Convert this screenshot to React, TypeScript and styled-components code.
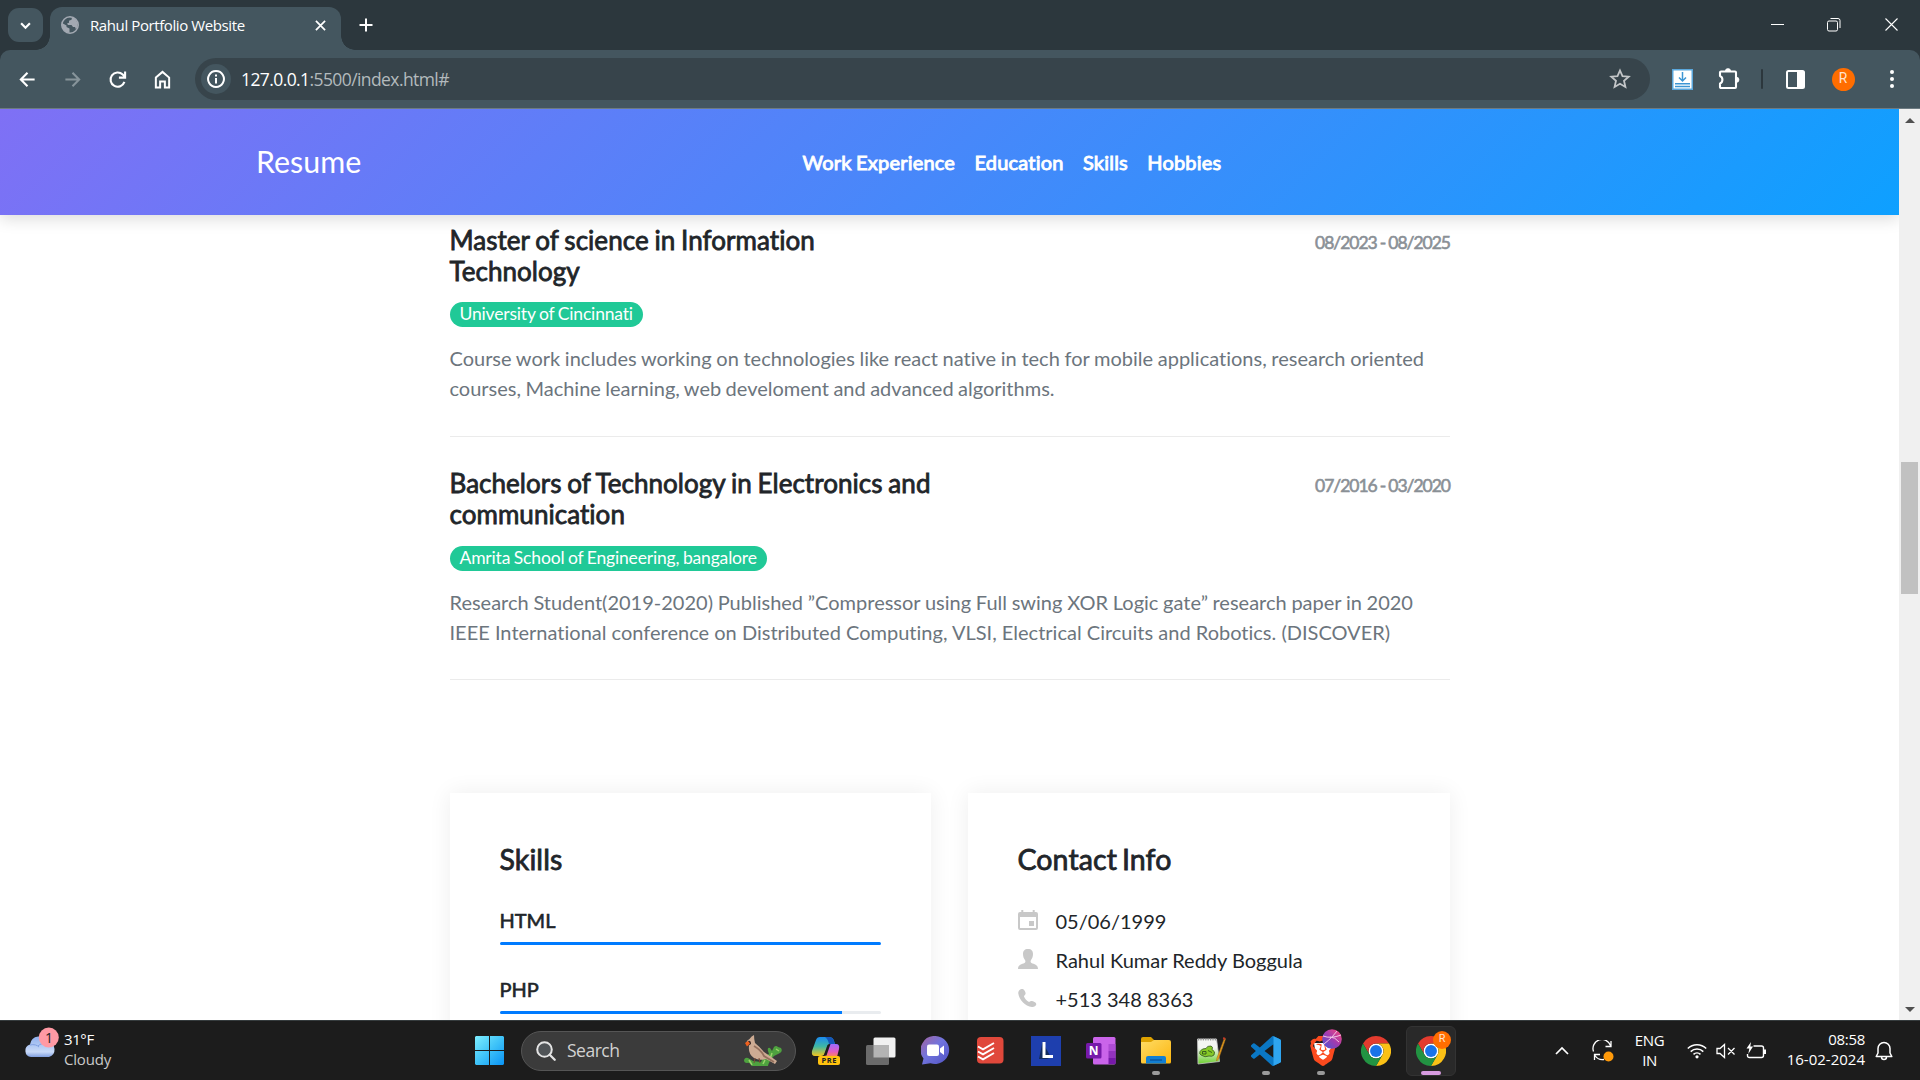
import React from "react";
import styled, { createGlobalStyle, css } from "styled-components";
import { SiBrave } from "react-icons/si";

const ui = `"Open Sans", "Noto Sans", sans-serif`;
const lato = `Lato, "Open Sans", sans-serif`;

const GlobalStyle = createGlobalStyle`
  *, *::before, *::after { box-sizing: border-box; }
  html, body { margin: 0; padding: 0; overflow: hidden; }
  h1, h2, h3, h4, p, ul { margin: 0; padding: 0; font-weight: 400; }
  ul { list-style: none; }
  svg { display: block; flex: none; }
`;

const Desktop = styled.div`
  width: 1920px;
  height: 1080px;
  display: flex;
  flex-direction: column;
  overflow: hidden;
  background: #2c373d;
  font-family: ${ui};
`;

/* Browser frame */

const TabStrip = styled.div`
  height: 50px;
  flex: none;
  display: flex;
  align-items: flex-start;
  padding: 8px 0 0 8px;
  color: #fff;
`;

const TabSearch = styled.div`
  width: 35px;
  height: 34px;
  border-radius: 11px;
  background: #44565f;
  display: grid;
  place-items: center;
`;

const Tab = styled.div`
  position: relative;
  width: 291px;
  height: 43px;
  margin: -1px 0 0 7px;
  padding: 0 15px 7px 11px;
  display: flex;
  align-items: center;
  border-radius: 12px 12px 0 0;
  background: #44565f;
  &::before, &::after {
    content: "";
    position: absolute;
    bottom: 0;
    width: 14px;
    height: 14px;
  }
  &::before { left: -14px; background: radial-gradient(circle at 0 0, transparent 13.5px, #44565f 14px); }
  &::after { right: -14px; background: radial-gradient(circle at 100% 0, transparent 13.5px, #44565f 14px); }
`;

const TabTitle = styled.span`
  flex: 1;
  margin-left: 11px;
  font-size: 15px;
  line-height: 20px;
  letter-spacing: -0.4px;
  white-space: nowrap;
`;

const Slot = styled.div<{ $w: number }>`
  width: ${(p) => p.$w}px;
  flex: none;
  align-self: stretch;
  display: flex;
  align-items: center;
  justify-content: center;
`;

const NewTab = styled(Slot)`
  height: 34px;
  align-self: flex-start;
`;

const WindowControls = styled.div`
  display: flex;
  height: 33px;
  margin-left: auto;
`;

const Toolbar = styled.div`
  height: 59px;
  flex: none;
  display: flex;
  align-items: center;
  padding-left: 6px;
  background: #44565f;
  border-bottom: 1px solid #6d7b82;
  border-radius: 10px 10px 0 0;
  color: #fff;
`;

const Omnibox = styled.div`
  width: 1455px;
  height: 42px;
  margin: 0 9px 0 10px;
  padding: 0 19px 0 6px;
  display: flex;
  align-items: center;
  border-radius: 21px;
  background: #37444b;
`;

const SiteInfo = styled.span`
  width: 30px;
  height: 30px;
  border-radius: 50%;
  background: #44565f;
  display: grid;
  place-items: center;
`;

const Url = styled.span`
  flex: 1;
  margin-left: 10px;
  font-size: 17.5px;
  letter-spacing: -0.59px;
  color: #b3babd;
  b { font-weight: 400; color: #fff; }
`;

const Divider = styled.i`
  width: 2px;
  height: 20px;
  border-radius: 1px;
  background: #2c373d;
`;

const Avatar = styled.span<{ $size: number }>`
  width: ${(p) => p.$size}px;
  height: ${(p) => p.$size}px;
  border-radius: 50%;
  background: #ff6d00;
  color: #ffe3cf;
  display: grid;
  place-items: center;
  font: 400 ${(p) => p.$size * 0.6}px/1 Roboto, sans-serif;
  letter-spacing: 0;
`;

/* Web page */

const Viewport = styled.div`
  height: 911px;
  flex: none;
  display: flex;
  background: #fff;
  overflow: hidden;
`;

const Page = styled.div`
  width: 1899px;
  height: 100%;
  overflow: hidden;
  font-family: ${lato};
  font-variant-ligatures: none;
  color: #212529;
`;

const Header = styled.header`
  position: relative;
  height: 106px;
  padding-left: 256px;
  display: flex;
  align-items: center;
  background: linear-gradient(135deg, #7f70f5 0%, #0ea0ff 100%);
  box-shadow: 0 4px 15px rgba(0, 0, 0, 0.14);
  color: #fff;
`;

const Brand = styled.h1`
  width: 546.5px;
  padding-bottom: 2px;
  font-size: 30.4px;
  line-height: 36px;
`;

const Nav = styled.nav`
  display: flex;
  gap: 19.3px;
  font-size: 20px;
  line-height: 30px;
  letter-spacing: 0.21px;
  word-spacing: -1px;
  -webkit-text-stroke: 0.9px currentColor;
`;

const NavLink = styled.a`
  white-space: nowrap;
`;

const Column = styled.main`
  width: 1000px;
  margin: 0 auto;
  padding-top: 10px;
`;

const Entry = styled.article`
  height: 243.4px;
`;

const EntryHead = styled.div`
  display: flex;
  justify-content: space-between;
  align-items: flex-start;
  height: 62px;
`;

const fauxBold = css`
  -webkit-text-stroke: 0.8px currentColor;
`;

const EntryTitle = styled.h3`
  width: 500px;
  font-size: 26px;
  line-height: 31px;
  letter-spacing: 0.04px;
  word-spacing: -0.9px;
  ${fauxBold}
`;

const Dates = styled.span`
  padding-top: 6px;
  margin-right: -0.5px;
  font-size: 17.5px;
  line-height: 24px;
  letter-spacing: -1.02px;
  word-spacing: -0.4px;
  color: #8a9096;
  white-space: nowrap;
  -webkit-text-stroke: 0.6px currentColor;
`;

const Badge = styled.span`
  display: block;
  width: fit-content;
  height: 25px;
  margin-top: 15.3px;
  padding: 0 10px;
  border-radius: 13px;
  background: #20c997;
  color: #fff;
  font-size: 17.5px;
  line-height: 23px;
  letter-spacing: -0.17px;
  word-spacing: -0.7px;
  white-space: nowrap;
`;

const Summary = styled.p`
  margin-top: 16px;
  padding-bottom: 32.3px;
  font-size: 20px;
  line-height: 30px;
  color: #6c757d;
  border-bottom: 1px solid #ebebeb;
  white-space: nowrap;
`;

const SummaryLine = styled.span<{ $gap: number }>`
  display: block;
  word-spacing: ${(p) => p.$gap}px;
`;

const Cards = styled.section`
  display: grid;
  grid-template-columns: 481px 482px;
  justify-content: space-between;
  margin-top: 81.2px;
`;

const Card = styled.div`
  height: 500px;
  padding: 49.3px 50px;
  box-shadow: 0 0 22px rgba(0, 0, 0, 0.07);
`;

const CardTitle = styled.h2`
  font-size: 28.5px;
  line-height: 34px;
  letter-spacing: 0.1px;
  word-spacing: -2.5px;
  ${fauxBold}
`;

const Skill = styled.div<{ $first?: boolean }>`
  margin-top: ${(p) => (p.$first ? 28.5 : 28.8)}px;
`;

const SkillName = styled.h4`
  font-size: 20px;
  line-height: 30px;
  -webkit-text-stroke: 0.6px currentColor;
`;

const Track = styled.div`
  height: 3px;
  margin-top: 7.2px;
  border-radius: 2px;
  background: #e9ecef;
  overflow: hidden;
`;

const Fill = styled.div`
  height: 100%;
  background: #007bff;
`;

const ContactList = styled.ul`
  margin-top: 25.2px;
`;

const ContactItem = styled.li`
  height: 39px;
  display: flex;
  align-items: center;
  gap: 18px;
  font-size: 20px;
  line-height: 30px;
  svg { color: #c8c8c8; margin-top: -2px; }
`;

const Scrollbar = styled.div`
  width: 21px;
  height: 100%;
  display: flex;
  flex-direction: column;
  align-items: center;
  background: #f0f0f0;
  padding: 9px 0 8px;
`;

const Thumb = styled.div`
  width: 17px;
  height: 132px;
  margin: 339px 0 auto;
  background: #c1c1c1;
`;

const Arrow = styled.i<{ $down?: boolean }>`
  width: 0;
  height: 0;
  border: 5px solid transparent;
  border-top-width: ${(p) => (p.$down ? 5 : 0)}px;
  border-bottom-width: ${(p) => (p.$down ? 0 : 5)}px;
  border-${(p) => (p.$down ? "top" : "bottom")}-color: #505050;
`;

/* Taskbar */

const Taskbar = styled.footer`
  height: 60px;
  flex: none;
  display: flex;
  align-items: center;
  background: #1c1c1c;
  border-top: 1px solid #353b3d;
  color: #fff;
`;

const Weather = styled.div`
  width: 462px;
  height: 100%;
  padding: 6px 0 0 24px;
  display: flex;
`;

const WeatherText = styled.div`
  margin: 2px 0 0 5px;
  font-size: 15px;
  line-height: 20px;
  letter-spacing: -0.4px;
  span { display: block; color: #c9c9c9; letter-spacing: -0.2px; }
`;

const SearchBox = styled.div`
  width: 275px;
  height: 40px;
  margin: 0 2px 0 4px;
  padding: 0 12px 0 14px;
  display: flex;
  align-items: center;
  border: 1px solid #555;
  border-radius: 20px;
  background: #3b3b3b;
  color: #d2d2d2;
  font-size: 17.5px;
  letter-spacing: -0.5px;
  span { flex: 1; margin: -1px 0 0 11px; }
`;

const AppSlot = styled.div<{ $active?: boolean }>`
  position: relative;
  width: 55px;
  height: 50px;
  display: flex;
  flex-direction: column;
  align-items: center;
  justify-content: center;
  ${(p) =>
    p.$active &&
    css`
      width: 50px;
      margin-left: 3px;
      border: 1px solid #333;
      border-radius: 6px;
      background: #292929;
    `}
`;

const Marker = styled.i<{ $active?: boolean }>`
  position: absolute;
  bottom: ${(p) => (p.$active ? 0 : 1)}px;
  width: ${(p) => (p.$active ? 20 : 8)}px;
  height: 4px;
  border-radius: 2px;
  background: ${(p) => (p.$active ? "#d79be0" : "#9a9a9a")};
`;

const ProfileBadge = styled.span<{ $top: number; $right: number }>`
  position: absolute;
  top: ${(p) => p.$top}px;
  right: ${(p) => p.$right}px;
`;

const Tray = styled.div`
  margin-left: auto;
  padding-right: 18px;
  height: 100%;
  display: flex;
  align-items: center;
  font-size: 15px;
  line-height: 20px;
  letter-spacing: -0.4px;
`;

const Lang = styled.div`
  width: 65px;
  padding-bottom: 2px;
  text-align: center;
`;

const Clock = styled.div`
  width: 93px;
  padding-bottom: 3px;
  text-align: right;
  white-space: nowrap;
  letter-spacing: 0;
  span { display: block; letter-spacing: -0.3px; }
`;

type Line = { d: string; size?: number; w?: number; color?: string; box?: number };
const Stroke = ({ d, size = 20, w = 2, color = "#fff", box = 20 }: Line) => (
  <svg width={size} height={size} viewBox={`0 0 ${box} ${box}`} fill="none" stroke={color} strokeWidth={w}>
    <path d={d} />
  </svg>
);

const Globe = () => (
  <svg width="18" height="18" viewBox="0 0 18 18">
    <circle cx="9" cy="9" r="8.2" fill="#44565f" stroke="#a3a9b2" strokeWidth="1.6" />
    <path d="M1 7l4.500 2.500v1.500l3 1.500v4.500A8 8 0 0 1 1 9zM7 1.500h4l-.5 2.300-2.500 1v2l-2 .7L7 9h3.500l1.500 2h2l1 2.500A8.200 8.200 0 0 0 11 1z" fill="#a3a9b2" />
  </svg>
);

const DownloadIcon = () => (
  <svg width="21" height="21" viewBox="0 0 21 21">
    <rect x=".75" y=".75" width="19.500" height="19.500" fill="#fff" stroke="#5aa7dc" strokeWidth="1.500" />
    <path d="M10.500 3v8M7 8.500l3.500 3.500L14 8.500M3 14.800h15M3 17.600h15" fill="none" stroke="#3c96d4" strokeWidth="1.500" />
  </svg>
);

const Puzzle = () => (
  <svg width="24" height="24" viewBox="0 0 24 24">
    <path d="M4 4.500h14a1 1 0 0 1 1 1V20a1 1 0 0 1-1 1H4a1 1 0 0 1-1-1v-3.600c3.200-1.200 3.200-6.100 0-7.300V5.500a1 1 0 0 1 1-1z" fill="none" stroke="#fff" strokeWidth="2.100" strokeLinejoin="round" />
    <path d="M8.300 4.200a2.700 2.700 0 0 1 5.400 0zM19.300 10.100a2.700 2.700 0 0 1 0 5.400z" fill="#fff" stroke="#fff" strokeWidth=".6" />
  </svg>
);

const SidePanel = () => (
  <svg width="19" height="19" viewBox="0 0 19 19">
    <rect x="1" y="1" width="17" height="17" rx="1.500" fill="none" stroke="#fff" strokeWidth="2" />
    <path d="M11 1h7v17h-7z" fill="#fff" />
  </svg>
);

const Cloud = () => (
  <svg width="35" height="32" viewBox="0 0 35 32">
    <defs>
      <linearGradient id="cloud" x2="0" y2="1">
        <stop offset="0" stopColor="#8fb0ee" />
        <stop offset=".75" stopColor="#c9daf8" />
        <stop offset="1" stopColor="#7f9fe0" />
      </linearGradient>
    </defs>
    <path d="M7 30a6.400 6.400 0 0 1-1-12.500 9.500 9.500 0 0 1 18-2.500 7.700 7.700 0 0 1 1 15z" fill="url(#cloud)" />
    <path d="M6 18c4-1 7 0 9 2M14 19c2-2 4-2.500 6-2.300" fill="none" stroke="#7c9ce0" strokeWidth=".9" />
    <circle cx="24.800" cy="10.500" r="10" fill="#ff99a4" />
    <text x="25" y="15.500" textAnchor="middle" fontSize="14" fontFamily="Open Sans, sans-serif" fill="#222">1</text>
  </svg>
);

const Windows = () => (
  <svg width="29" height="29" viewBox="0 0 29 29">
    <defs>
      <linearGradient id="win" x2="1" y2="1">
        <stop offset="0" stopColor="#7eeeff" />
        <stop offset=".5" stopColor="#3fc3f8" />
        <stop offset="1" stopColor="#0a93f5" />
      </linearGradient>
    </defs>
    <path d="M1 0h13v14H0V1zM15 0h13l1 1v13H15zM0 15h14v14H1l-1-1zM15 15h14v13l-1 1H15z" fill="url(#win)" />
  </svg>
);

const SearchGlass = () => (
  <svg width="20" height="20" viewBox="0 0 20 20" fill="none" stroke="#e4e4e4">
    <circle cx="8.500" cy="8.500" r="7.300" strokeWidth="2" fill="#505457" />
    <path d="M13.700 13.700l5 5" strokeWidth="2.300" strokeLinecap="round" />
  </svg>
);

const Bird = () => (
  <svg width="40" height="32" viewBox="0 0 40 32">
    <path d="M1 25q1-3 4-2l5 3 8 1q2-6 8-8l-1-3q-1-4 2-3l2 3 2-4q2-2 4 0l3 1q2 3-1 5l-6 3q-5 5-6 10H9q-2-4-5-3-3 0-3-3z" fill="#4ea23f" />
    <path d="M6 25l3 5M27 24l2-6M33 14l3 2M20 29l2-4" stroke="#9ad36a" strokeWidth="1.500" />
    <path d="M3 8q1-3 3.500-4 2-3 4.500-4 0 4 1 8 5 4 9 9l13 9-2 3-9-5q-7 2-12-1-6-4-5-12z" fill="#cdab93" />
    <path d="M11 11q7 4 10 10l10 6" stroke="#94705d" strokeWidth="1.800" fill="none" />
    <path d="M5 6q3-1 3 3l-3 2z" fill="#3b2a26" />
    <path d="M2 8l3-2 2 2.500-3 3z" fill="#f0601d" />
    <path d="M12 23l-1 5M16 23l1 5" stroke="#7c4b36" />
  </svg>
);

const Copilot = () => (
  <svg width="30" height="30" viewBox="0 0 30 30">
    <defs>
      <linearGradient id="cpa" x2="0" y2="1">
        <stop offset="0" stopColor="#1b8bf0" />
        <stop offset=".5" stopColor="#3fb8a4" />
        <stop offset="1" stopColor="#f3c51c" />
      </linearGradient>
      <linearGradient id="cpb" x2="0" y2="1">
        <stop offset="0" stopColor="#9c6bff" />
        <stop offset=".6" stopColor="#e45bc0" />
        <stop offset="1" stopColor="#ff8c4a" />
      </linearGradient>
    </defs>
    <path d="M9 1h9q4 0 5 4l1 3h-4q-3 0-4 3l-2 6q-1 3-4 3H4q-4 0-3-5L5 4q1-3 4-3z" fill="url(#cpa)" />
    <path d="M14 1h4q4 0 5 4l1 3h-6q-1-5-4-7z" fill="#1556b8" />
    <path d="M20 8h5q4 0 3 5l-2 8H15l-2-1 3-9q1-3 4-3z" fill="url(#cpb)" />
    <path d="M16.500 9q1-1.200 3-1l-4 11.500-3 .5z" fill="#1c1c1c" />
    <rect x="7" y="20" width="22" height="9" rx="2" fill="#ffc20e" />
    <text x="18.300" y="27.300" textAnchor="middle" fontSize="7.500" fontWeight="700" letterSpacing=".6" fontFamily="Open Sans, sans-serif" fill="#222">PRE</text>
  </svg>
);

const TaskView = () => (
  <svg width="30" height="28" viewBox="0 0 30 28">
    <rect x="7.500" y=".5" width="22" height="20" rx="1.500" fill="#f1f1f1" />
    <rect x="0" y="8" width="23" height="20" rx="1.500" fill="#6b6b6b" />
    <path d="M7.500 8H23v12.500H7.500z" fill="#b4b4b4" />
  </svg>
);

const Chat = () => (
  <svg width="29" height="29" viewBox="0 0 29 29">
    <defs>
      <linearGradient id="chat" x2="1" y2="1">
        <stop offset="0" stopColor="#a5639e" />
        <stop offset=".45" stopColor="#7174dd" />
        <stop offset="1" stopColor="#5052c2" />
      </linearGradient>
    </defs>
    <path d="M14.500 0a14 14 0 1 1-5 27.200L1 28.500l1.500-6A14 14 0 0 1 14.500 0z" fill="url(#chat)" />
    <rect x="6" y="8.500" width="12" height="11.500" rx="2" fill="#fff" />
    <path d="M19 12.500l4-3v9.500l-4-3z" fill="#fff" />
  </svg>
);

const Todoist = () => (
  <svg width="27" height="27" viewBox="0 0 27 27">
    <rect width="26.500" height="26.500" rx="4" fill="#e0483b" />
    <path d="M1 9.500l5 2.800L17 6M1 14.500l5 2.800L17 11M1 19.500l5 2.800L17 16" fill="none" stroke="#fff" strokeWidth="1.900" />
  </svg>
);

const LetterL = () => (
  <svg width="30" height="30" viewBox="0 0 30 30">
    <path d="M0 0h30v30H0z" fill="#1e3fae" />
    <path d="M11.500 6L8 23h8l4-1.500z" fill="#112b5e" />
    <path d="M11.500 6h3v13H22v3H11.500z" fill="#fff" />
  </svg>
);

const OneNote = () => (
  <svg width="30" height="28" viewBox="0 0 30 28">
    <rect x="7" y="0" width="22.500" height="27.500" rx="1.500" fill="#ca64ea" />
    <path d="M22.500 7h7v7h-7z" fill="#ae4bd5" />
    <path d="M22.500 14h7v7h-7z" fill="#9332bf" />
    <path d="M22.500 21h7v6h-7z" fill="#7719aa" />
    <rect x="0" y="6" width="15.500" height="15.500" rx="1.500" fill="#7719aa" />
    <text x="7.700" y="18" textAnchor="middle" fontSize="12" fontWeight="700" fontFamily="Open Sans, sans-serif" fill="#fff">N</text>
  </svg>
);

const Explorer = () => (
  <svg width="30" height="27" viewBox="0 0 30 27">
    <defs>
      <linearGradient id="fold" x2="1" y2="1">
        <stop offset="0" stopColor="#ffdc65" />
        <stop offset="1" stopColor="#fcb50e" />
      </linearGradient>
    </defs>
    <path d="M0 2q0-2 2-2h8l3 3v4H0z" fill="#dea200" />
    <path d="M0 5h10l3-2h15q2 0 2 2v20q0 1.500-1.500 1.500h-27Q0 26.500 0 25z" fill="url(#fold)" />
    <path d="M5 26.500V21q0-2 2-2h16q2 0 2 2v5.500z" fill="#127fd2" />
    <path d="M9 23h12" stroke="#0a57a3" strokeWidth="1.500" />
  </svg>
);

const NotepadPP = () => (
  <svg width="30" height="28" viewBox="0 0 30 28">
    <defs>
      <linearGradient id="npp" x2="0" y2="1">
        <stop offset=".35" stopColor="#f4f6f2" />
        <stop offset="1" stopColor="#6ad02c" />
      </linearGradient>
    </defs>
    <path d="M1.500 2h19l3 22.500-21.500 2.500z" fill="url(#npp)" stroke="#c8c8c8" strokeWidth=".8" />
    <path d="M2 2.500h18" stroke="#999" strokeWidth="2" strokeDasharray="1.200 1.200" />
    <path d="M4 14.500q2-3.500 6-3 1-3 5-2.500 2.500 1 1 3.500 4 2 2 5.500-2 2-5 1-4 2-8-1-2-1-1-3.500z" fill="#86c927" stroke="#27461c" strokeWidth=".7" />
    <path d="M6.500 14.500h3.500v2.500H6.500zM12 13.500l4 2" fill="none" stroke="#27461c" strokeWidth=".8" />
    <path d="M28.500 1L21 21l-.5 3 2-2L29.500 2z" fill="#f0a21c" stroke="#a6701c" strokeWidth=".6" />
    <path d="M27.500 0l2 1-.7 2-2-1z" fill="#c23a28" />
  </svg>
);

const vsPath =
  "M23.150 2.587L18.210.210a1.494 1.494 0 0 0-1.705.290l-9.460 8.630-4.120-3.128a.999.999 0 0 0-1.276.057L.327 7.261A1 1 0 0 0 .326 8.740L3.899 12 .326 15.260a1 1 0 0 0 .001 1.479L1.650 17.940a.999.999 0 0 0 1.276.057l4.120-3.128 9.460 8.630a1.492 1.492 0 0 0 1.704.290l4.942-2.377A1.500 1.500 0 0 0 24 20.060V3.939a1.500 1.500 0 0 0-.850-1.352zm-5.146 14.861L10.826 12l7.178-5.448v10.896z";

const VsCode = () => (
  <svg width="30" height="30" viewBox="0 0 24 24">
    <path d={vsPath} fill="#0a77c4" />
    <path d="M18 .2l5.200 2.400q.8.400.8 1.300v16.200q0 .9-.8 1.300L18 23.800z" fill="#2fa5f0" />
  </svg>
);

const Chrome = () => (
  <svg width="30" height="30" viewBox="0 0 48 48">
    <circle cx="24" cy="24" r="12" fill="#fff" />
    <path d="M24,12H44.781a23.994,23.994,0,0,0-41.564.003L13.608,30l.009-.002A11.985,11.985,0,0,1,24,12Z" fill="#e33b2e" />
    <path d="M34.391,30.003,24.001,48A23.994,23.994,0,0,0,44.780,12.003H23.999l-.002.009A11.985,11.985,0,0,1,34.391,30.003Z" fill="#fbc116" />
    <path d="M13.609,30.003,3.218,12.006A23.994,23.994,0,0,0,24.002,48L34.393,30.003l-.007-.007a11.985,11.985,0,0,1-20.778.007Z" fill="#229342" />
    <circle cx="24" cy="24" r="9.500" fill="#1a73e8" />
  </svg>
);

const BraveWrap = styled.div`
  width: 26px;
  height: 30px;
  display: grid;
  place-items: center;
  color: #fb4a1e;
`;

const BraveBack = styled.svg`
  grid-area: 1 / 1;
`;

const BraveFace = styled(SiBrave)`
  grid-area: 1 / 1;
`;

const Brave = () => (
  <BraveWrap>
    <BraveBack width="22" height="26" viewBox="0 0 22 26">
      <path d="M2 5l18 0-2 13-7 6-7-6z" fill="#fff" />
    </BraveBack>
    <BraveFace size={30} />
  </BraveWrap>
);

const Ball = () => (
  <svg width="20" height="20" viewBox="0 0 20 20">
    <defs>
      <linearGradient id="ball" x1="1" x2="0" y2="1">
        <stop offset="0" stopColor="#ff4a78" />
        <stop offset=".5" stopColor="#a03bb0" />
        <stop offset="1" stopColor="#4257d8" />
      </linearGradient>
    </defs>
    <circle cx="10" cy="10" r="9.800" fill="url(#ball)" />
    <path d="M1 7q8 3 18-1M2 15q5-4 8-7l5-6M8 8q5 0 9 5" fill="none" stroke="#f3c4e4" strokeWidth="1" />
  </svg>
);

const SyncIcon = () => (
  <svg width="22" height="22" viewBox="0 0 22 22" fill="none" stroke="#fff" strokeWidth="1.300">
    <path d="M1.500 11.500A9 9 0 0 1 18.500 5.500M19 1v5.500h-5.500M12 19.500A9 9 0 0 1 3 15.500M2.500 20v-5.500H8" />
    <circle cx="16.500" cy="16.500" r="5" fill="#ff9a0a" stroke="none" />
  </svg>
);

const Wifi = () => (
  <svg width="20" height="16" viewBox="0 0 20 16" fill="none" stroke="#fff" strokeWidth="1.500">
    <path d="M.8 5.500a13 13 0 0 1 18.400 0M3.700 8.600a9 9 0 0 1 12.600 0M6.500 11.400a5 5 0 0 1 7 0" />
    <circle cx="10" cy="13.800" r="1.600" fill="#fff" stroke="none" />
  </svg>
);

const Mute = () => (
  <svg width="20" height="16" viewBox="0 0 20 16" fill="none" stroke="#fff" strokeWidth="1.300">
    <path d="M1 5.500h3L8.500 1.500v13L4 10.500H1zM12 5l6.500 6.500M18.500 5L12 11.500" />
  </svg>
);

const Battery = () => (
  <svg width="21" height="17" viewBox="0 0 21 17" fill="none" stroke="#fff" strokeWidth="1.400">
    <path d="M7.500 4h8q2 0 2 2v7.500q0 2-2 2H3.500q-2 0-2-2V12" />
    <path d="M18 7.500h2v4.500h-2z" fill="#fff" stroke="none" />
    <path d="M5 0L.5 6.500h2.800L2.300 12l4.700-7.500H4.300z" fill="#fff" stroke="none" />
  </svg>
);

const Bell = () => (
  <svg width="18" height="20" viewBox="0 0 18 20" fill="none" stroke="#fff" strokeWidth="1.500" strokeLinejoin="round">
    <path d="M3 7.500a6 6 0 0 1 12 0v4.500l1.800 3.500H1.200L3 12zM6.500 16a2.500 2.500 0 0 0 5 0" />
  </svg>
);

const CalendarIcon = () => (
  <svg width="20" height="20" viewBox="0 0 20 20" fill="currentColor">
    <path fillRule="evenodd" d="M3.300 0h2v2h9.400V0h2v2H18a2 2 0 0 1 2 2v14a2 2 0 0 1-2 2H2a2 2 0 0 1-2-2V4a2 2 0 0 1 2-2h1.300zM2 7v11h16V7zM11 11h5v5h-5z" />
  </svg>
);

const PersonIcon = () => (
  <svg width="20" height="20" viewBox="0 0 20 20" fill="currentColor">
    <path d="M10 0c3.500 0 5 2 5 5 0 2.500-.8 4.500-2 6-.8 1.300-.4 2.500.5 3 2.500 1.200 6.500 1.500 6.500 6H0c0-4.500 4-4.800 6.500-6 .9-.5 1.300-1.700.5-3-1.200-1.500-2-3.500-2-6 0-3 1.500-5 5-5z" />
  </svg>
);

const PhoneIcon = () => (
  <svg width="20" height="20" viewBox="0 0 20 20" fill="currentColor">
    <path d="M4.300 1C2 1 0 2.800.3 5.500 1 11.500 7 18.500 14 19c2.500.1 4.500-1.400 4.300-3-.3-1.800-3.800-3.300-5.300-3-1 .2-1.500 1.200-2.400.8C8.500 12.600 6.800 10.500 6 8.500c-.3-.9 1.500-1.500 1.600-2.800C7.700 3.800 6 1 4.300 1z" />
  </svg>
);

const entries = [
  {
    title: ["Master of science in Information", "Technology"],
    dates: "08/2023 - 08/2025",
    school: "University of Cincinnati",
    lines: [
      {
        gap: -0.45,
        text: "Course work includes working on technologies like react native in tech for mobile applications, research oriented",
      },
      { gap: -0.7, text: "courses, Machine learning, web develoment and advanced algorithms." },
    ],
  },
  {
    title: ["Bachelors of Technology in Electronics and", "communication"],
    dates: "07/2016 - 03/2020",
    school: "Amrita School of Engineering, bangalore",
    lines: [
      {
        gap: -0.4,
        text: "Research Student(2019-2020) Published ”Compressor using Full swing XOR Logic gate” research paper in 2020",
      },
      {
        gap: 0.05,
        text: "IEEE International conference on Distributed Computing, VLSI, Electrical Circuits and Robotics. (DISCOVER)",
      },
    ],
  },
];

const skills = [
  { name: "HTML", level: 100 },
  { name: "PHP", level: 90 },
];

const contacts = [
  { icon: <CalendarIcon />, text: "05/06/1999" },
  { icon: <PersonIcon />, text: "Rahul Kumar Reddy Boggula" },
  { icon: <PhoneIcon />, text: "+513 348 8363" },
];

const apps: { icon: React.ReactNode; open?: boolean; badge?: React.ReactNode }[] = [
  { icon: <Copilot /> },
  { icon: <TaskView /> },
  { icon: <Chat /> },
  { icon: <Todoist /> },
  { icon: <LetterL /> },
  { icon: <OneNote /> },
  { icon: <Explorer />, open: true },
  { icon: <NotepadPP /> },
  { icon: <VsCode />, open: true },
  { icon: <Brave />, open: true, badge: <Ball /> },
  { icon: <Chrome /> },
];

export default function App() {
  return (
    <Desktop>
      <GlobalStyle />
      <TabStrip>
        <TabSearch>
          <Stroke d="M1 3l4 4 4-4" size={11} box={10} w={2} />
        </TabSearch>
        <Tab>
          <Globe />
          <TabTitle>Rahul Portfolio Website</TabTitle>
          <Stroke d="M1 1l10 10M11 1L1 11" size={11} box={12} w={1.9} />
        </Tab>
        <NewTab $w={49}>
          <Stroke d="M7 .5v13M.5 7h13" size={14} box={14} w={2} />
        </NewTab>
        <WindowControls>
          <Slot $w={56}>
            <Stroke d="M0 6.500h13" size={13} box={13} w={1} />
          </Slot>
          <Slot $w={57}>
            <Stroke d="M.5 4.500q0-1.500 1.500-1.500h7q1.500 0 1.500 1.500v7q0 1.500-1.500 1.500h-7q-1.500 0-1.500-1.500zM3.500.5H11q2 0 2 2V10" size={14} box={14} w={1} />
          </Slot>
          <Slot $w={58}>
            <Stroke d="M.5.5l12 12M12.500.5l-12 12" size={13} box={13} w={1.1} />
          </Slot>
        </WindowControls>
      </TabStrip>

      <Toolbar>
        <Slot $w={43}>
          <Stroke d="M17.500 10H3.500M10 3l-7 7 7 7" w={2.2} size={19} />
        </Slot>
        <Slot $w={46}>
          <Stroke d="M2.500 10h14M10 3l7 7-7 7" w={2.2} size={19} color="#87949a" />
        </Slot>
        <Slot $w={45}>
          <Stroke d="M17.300 12.500A7.500 7.500 0 1 1 15.500 4.800L17.500 7M18 1.500V8h-6.500" w={2.2} size={19} />
        </Slot>
        <Slot $w={45}>
          <Stroke d="M3 8L10 2l7 6v10.500h-4.500V12h-5v6.500H3z" w={2.100} size={19} />
        </Slot>
        <Omnibox>
          <SiteInfo>
            <Stroke d="M9 1.100a7.900 7.900 0 1 0 .01 0zM9 8v5.500M9 4.500v2" size={18} box={18} w={2} />
          </SiteInfo>
          <Url>
            <b>127.0.0.1</b>:5500/index.html#
          </Url>
          <Stroke d="M11 2.500l2.500 5.700 6.200.5-4.700 4.100 1.400 6.100L11 15.700 5.600 18.900 7 12.800 2.300 8.700l6.200-.5z" size={22} box={22} w={1.8} color="#c3c6c8" />
        </Omnibox>
        <Slot $w={46}>
          <DownloadIcon />
        </Slot>
        <Slot $w={47}>
          <Puzzle />
        </Slot>
        <Slot $w={19}>
          <Divider />
        </Slot>
        <Slot $w={48}>
          <SidePanel />
        </Slot>
        <Slot $w={48}>
          <Avatar $size={23}>R</Avatar>
        </Slot>
        <Slot $w={50}>
          <svg width="4" height="18" viewBox="0 0 4 18" fill="#fff">
            <circle cx="2" cy="2" r="2" />
            <circle cx="2" cy="9" r="2" />
            <circle cx="2" cy="16" r="2" />
          </svg>
        </Slot>
      </Toolbar>

      <Viewport>
        <Page>
          <Header>
            <Brand>Resume</Brand>
            <Nav>
              {["Work Experience", "Education", "Skills", "Hobbies"].map((t) => (
                <NavLink key={t}>{t}</NavLink>
              ))}
            </Nav>
          </Header>
          <Column>
            {entries.map((e) => (
              <Entry key={e.school}>
                <EntryHead>
                  <EntryTitle>
                    {e.title[0]}
                    <br />
                    {e.title[1]}
                  </EntryTitle>
                  <Dates>{e.dates}</Dates>
                </EntryHead>
                <Badge>{e.school}</Badge>
                <Summary>
                  {e.lines.map((l) => (
                    <SummaryLine key={l.text} $gap={l.gap}>
                      {l.text}
                    </SummaryLine>
                  ))}
                </Summary>
              </Entry>
            ))}
            <Cards>
              <Card>
                <CardTitle>Skills</CardTitle>
                {skills.map((s, i) => (
                  <Skill key={s.name} $first={i === 0}>
                    <SkillName>{s.name}</SkillName>
                    <Track>
                      <Fill style={{ width: `${s.level}%` }} />
                    </Track>
                  </Skill>
                ))}
              </Card>
              <Card>
                <CardTitle>Contact Info</CardTitle>
                <ContactList>
                  {contacts.map((c) => (
                    <ContactItem key={c.text}>
                      {c.icon}
                      {c.text}
                    </ContactItem>
                  ))}
                </ContactList>
              </Card>
            </Cards>
          </Column>
        </Page>
        <Scrollbar>
          <Arrow />
          <Thumb />
          <Arrow $down />
        </Scrollbar>
      </Viewport>

      <Taskbar>
        <Weather>
          <Cloud />
          <WeatherText>
            31°F
            <span>Cloudy</span>
          </WeatherText>
        </Weather>
        <AppSlot>
          <Windows />
        </AppSlot>
        <SearchBox>
          <SearchGlass />
          <span>Search</span>
          <Bird />
        </SearchBox>
        {apps.map((a, i) => (
          <AppSlot key={i}>
            {a.icon}
            {a.badge && (
              <ProfileBadge $top={3} $right={6}>
                {a.badge}
              </ProfileBadge>
            )}
            {a.open && <Marker />}
          </AppSlot>
        ))}
        <AppSlot $active>
          <Chrome />
          <ProfileBadge $top={4} $right={4}>
            <Avatar $size={18}>R</Avatar>
          </ProfileBadge>
          <Marker $active />
        </AppSlot>
        <Tray>
          <Slot $w={52}>
            <Stroke d="M1 10l6-6 6 6" size={14} box={14} w={1.7} />
          </Slot>
          <Slot $w={29}>
            <SyncIcon />
          </Slot>
          <Lang>
            ENG
            <br />
            IN
          </Lang>
          <Slot $w={30}>
            <Wifi />
          </Slot>
          <Slot $w={28}>
            <Mute />
          </Slot>
          <Slot $w={32}>
            <Battery />
          </Slot>
          <Clock>
            <span>08:58</span>
            16-02-2024
          </Clock>
          <Slot $w={37}>
            <Bell />
          </Slot>
        </Tray>
      </Taskbar>
    </Desktop>
  );
}
